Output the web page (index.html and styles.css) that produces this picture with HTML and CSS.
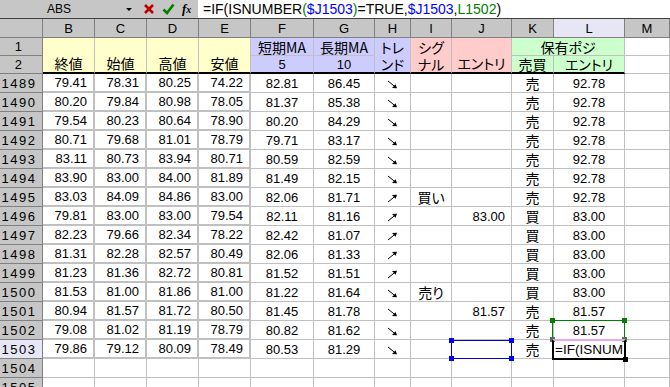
FILE: index.html
```html
<!DOCTYPE html>
<html>
<head>
<title>Sheet</title>
<meta charset="utf-8">
<link rel="stylesheet" href="styles.css">
</head>
<body>
    <div class="bar">
        <div class="namebox">ABS</div>
        <div class="drop"></div>
        <div class="tools">
            <svg class="cancel" width="12" height="12" viewBox="0 0 12 12"><path d="M2 2 L10 10 M10 2 L2 10" /></svg>
            <svg class="enter" width="13" height="12" viewBox="0 0 13 12"><path d="M1.5 6.5 L5 10 L11.5 1.5" /></svg>
            <span class="fx">f<small>x</small></span>
        </div>
        <div class="formula">=IF(ISNUMBER<span class="rg">(</span><span class="rb">$J1503</span><span class="rg">)</span>=TRUE,<span class="rb">$J1503</span>,<span class="rg">L1502</span>)</div>
    </div>

    <div class="sheet">
        <!-- column headers -->
        <div class="c h"></div>
        <div class="c h">B</div>
        <div class="c h">C</div>
        <div class="c h">D</div>
        <div class="c h">E</div>
        <div class="c h">F</div>
        <div class="c h">G</div>
        <div class="c h">H</div>
        <div class="c h">I</div>
        <div class="c h">J</div>
        <div class="c h">K</div>
        <div class="c h hl">L</div>
        <div class="c h">M</div>

        <!-- row 1 -->
        <div class="c rh">1</div>
        <div class="c y tall tb jp">終値</div>
        <div class="c y tall tb jp">始値</div>
        <div class="c y tall tb jp">高値</div>
        <div class="c y tall tb jp">安値</div>
        <div class="c p ctr jp">短期MA</div>
        <div class="c p ctr jp">長期MA</div>
        <div class="c p tall wrap tb jp">トレ<br>ンド</div>
        <div class="c r tall wrap tb jp">シグ<br>ナル</div>
        <div class="c r tall tb jp">エントリ</div>
        <div class="c g ctr jp wide">保有ポジ</div>
        <div class="c"></div>

        <!-- row 2 -->
        <div class="c rh">2</div>
        <div class="c p ctr tb">5</div>
        <div class="c p ctr tb">10</div>
        <div class="c g ctr tb jp">売買</div>
        <div class="c g ctr tb jp">エントリ</div>
        <div class="c"></div>
    </div>

    <script>
        let down = '<svg width="11" height="9" viewBox="0 0 11 9"><path d="M1 1 L9 7.5" stroke="#000" stroke-width="1"/><path d="M10 8.3 L5 8 L8.6 4.2 Z" fill="#000"/></svg>';
        let up = '<svg width="11" height="9" viewBox="0 0 11 9"><path d="M1 8 L9 1.5" stroke="#000" stroke-width="1"/><path d="M10 0.7 L8.6 4.8 L5 1 Z" fill="#000"/></svg>';

        let data = [
            [1489,'79.41','78.31','80.25','74.22','82.81','86.45','d','','','売','92.78'],
            [1490,'80.20','79.84','80.98','78.05','81.37','85.38','d','','','売','92.78'],
            [1491,'79.54','80.23','80.64','78.90','80.20','84.29','d','','','売','92.78'],
            [1492,'80.71','79.68','81.01','78.79','79.71','83.17','d','','','売','92.78'],
            [1493,'83.11','80.73','83.94','80.71','80.59','82.59','d','','','売','92.78'],
            [1494,'83.90','83.00','84.00','81.89','81.49','82.15','d','','','売','92.78'],
            [1495,'83.03','84.09','84.86','83.00','82.06','81.71','u','買い','','売','92.78'],
            [1496,'79.81','83.00','83.00','79.54','82.11','81.16','u','','83.00','買','83.00'],
            [1497,'82.23','79.66','82.34','78.22','82.42','81.07','u','','','買','83.00'],
            [1498,'81.31','82.28','82.57','80.49','82.06','81.33','u','','','買','83.00'],
            [1499,'81.23','81.36','82.72','80.81','81.52','81.51','u','','','買','83.00'],
            [1500,'81.53','81.00','81.86','81.00','81.22','81.64','d','売り','','買','83.00'],
            [1501,'80.94','81.57','81.72','80.50','81.45','81.78','d','','81.57','売','81.57'],
            [1502,'79.08','81.02','81.19','78.79','80.82','81.62','d','','','売','81.57'],
            [1503,'79.86','79.12','80.09','78.49','80.53','81.29','d','','','売','']
        ];

        let sheet = document.querySelector('.sheet');
        let handles = '<i class="hd tl"></i><i class="hd tr"></i><i class="hd bl"></i><i class="hd br"></i>';

        function cell(cls, html){
            let d = document.createElement('div');
            d.className = 'c ' + cls;
            d.innerHTML = html;
            sheet.appendChild(d);
            return d;
        }

        for (let i = 0; i < data.length; i++){
            let r = data[i];
            cell('rh' + (r[0] == 1503 ? ' hl' : ''), r[0]);
            for (let k = 1; k <= 4; k++){
                cell('num box', r[k]);
            }
            cell('ctr', r[5]);
            cell('ctr', r[6]);
            cell('ctr arrow', r[7] == 'd' ? down : up);
            cell('ctr jp', r[8]);
            let j = cell('num', r[9]);
            cell('ctr jp', r[10]);
            let l = cell('ctr', r[11]);
            cell('', '');

            if (r[0] == 1502){
                l.innerHTML += '<div class="ref green">' + handles + '</div>';
            }
            if (r[0] == 1503){
                j.innerHTML = '<div class="ref blue">' + handles + '</div>';
                l.className = 'c edit';
                l.innerHTML = '<span>=IF(ISNUM</span><div class="active"></div><i class="fill"></i>';
            }
        }

        // empty rows below
        for (let n = 1504; n <= 1505; n++){
            cell('rh', n);
            for (let k = 0; k < 12; k++){
                cell('', '');
            }
        }
    </script>
</body>
</html>
```

FILE: styles.css
```css
*{
    box-sizing: border-box;
}
body{
    margin: 0;
    width: 670px;
    height: 387px;
    overflow: hidden;
    background-color: #fff;
    font-family: "Liberation Sans", "Noto Sans CJK JP", sans-serif;
}

/* formula bar */
.bar{
    display: flex;
    height: 19px;
    background-color: #c6c6c6;
    border-bottom: 1px solid #404040;
}
.namebox{
    width: 118px;
    text-align: center;
    font-size: 12px;
    line-height: 18px;
}
.drop{
    margin: 8px 0 0 8px;
    width: 0;
    height: 0;
    border-left: 3px solid transparent;
    border-right: 3px solid transparent;
    border-top: 3px solid #000;
}
.tools{
    display: flex;
    align-items: center;
    gap: 7px;
    width: 66px;
    padding-left: 11px;
}
.cancel path{
    fill: none;
    stroke: #c00000;
    stroke-width: 2.6;
}
.enter path{
    fill: none;
    stroke: #008000;
    stroke-width: 2.6;
}
.fx{
    font-family: "Liberation Serif", serif;
    font-style: italic;
    font-weight: bold;
    font-size: 13px;
    line-height: 18px;
}
.fx small{
    font-size: 10px;
}
.formula{
    flex: 1;
    background-color: #fff;
    padding-left: 5px;
    font-size: 14px;
    line-height: 18px;
    white-space: nowrap;
    overflow: hidden;
}
.rb{
    color: #0000ff;
}
.rg{
    color: #008000;
}

/* grid */
.sheet{
    display: grid;
    grid-template-columns: 43px 52px 52px 52px 52px 63px 61px 36px 41px 60px 42px 71px 1fr;
    grid-template-rows: 19px 18px 18px;
    grid-auto-rows: 19px;
}
.c{
    position: relative;
    display: flex;
    align-items: center;
    border-right: 1px solid #c0c0c0;
    border-bottom: 1px solid #c0c0c0;
    font-size: 13px;
    white-space: nowrap;
    overflow: visible;
}
.h{
    justify-content: center;
    background-color: #c6c6c6;
    border-color: #808080;
    font-size: 13px;
}
.rh{
    justify-content: center;
    padding-right: 4px;
    background-color: #c6c6c6;
    border-color: #808080;
    font-size: 13px;
    letter-spacing: 1.5px;
}
.hl{
    background-color: #e6e6f5;
}
.num{
    justify-content: flex-end;
    padding-right: 6px;
}
.ctr{
    justify-content: center;
}
.box{
    border-right: 2px solid #c0c0c0;
    border-bottom: 2px solid #c0c0c0;
}
.arrow svg{
    margin-top: 2px;
}
.jp{
    font-family: "Noto Sans CJK JP", sans-serif;
    font-size: 14px;
    font-feature-settings: "palt";
}

/* header colours */
.y{
    background-color: #ffffcc;
}
.p{
    background-color: #ccccff;
}
.r{
    background-color: #ffcccc;
}
.g{
    background-color: #ccffcc;
}
.tall{
    grid-row: span 2;
    justify-content: center;
    align-items: flex-end;
    line-height: 18px;
}
.wrap{
    display: block;
    text-align: center;
    line-height: 17px;
    padding-top: 1px;
}
.wide{
    grid-column: span 2;
}
.tb{
    border-bottom: 2px solid #000;
}

/* reference highlights */
.ref{
    position: absolute;
    z-index: 2;
    left: -2px;
    top: -1px;
    right: -1px;
    bottom: -1px;
    border: 1px solid currentColor;
}
.ref.blue{
    color: #0000c8;
    left: -1px;
    top: 0;
}
.ref.green{
    color: #008000;
}
.hd{
    position: absolute;
    width: 5px;
    height: 5px;
    background-color: currentColor;
}
.ref.blue .hd{
    background-color: #0000ff;
}
.tl{
    left: -3px;
    top: -3px;
}
.tr{
    right: -3px;
    top: -3px;
}
.bl{
    left: -3px;
    bottom: -3px;
}
.br{
    right: -3px;
    bottom: -3px;
}
.ref.green .bl, .ref.green .br{
    background-color: #507050;
}

/* cell being edited */
.edit{
    padding-left: 1px;
    font-size: 13.5px;
}
.edit span{
    width: 68px;
    overflow: hidden;
}
.active{
    position: absolute;
    z-index: 3;
    left: -2px;
    top: -1px;
    right: -2px;
    bottom: -2px;
    border: 2px solid #000;
    border-top-color: #e8a8e8;
}
.fill{
    position: absolute;
    z-index: 4;
    right: -4px;
    bottom: -4px;
    width: 5px;
    height: 5px;
    background-color: #000;
}
```
